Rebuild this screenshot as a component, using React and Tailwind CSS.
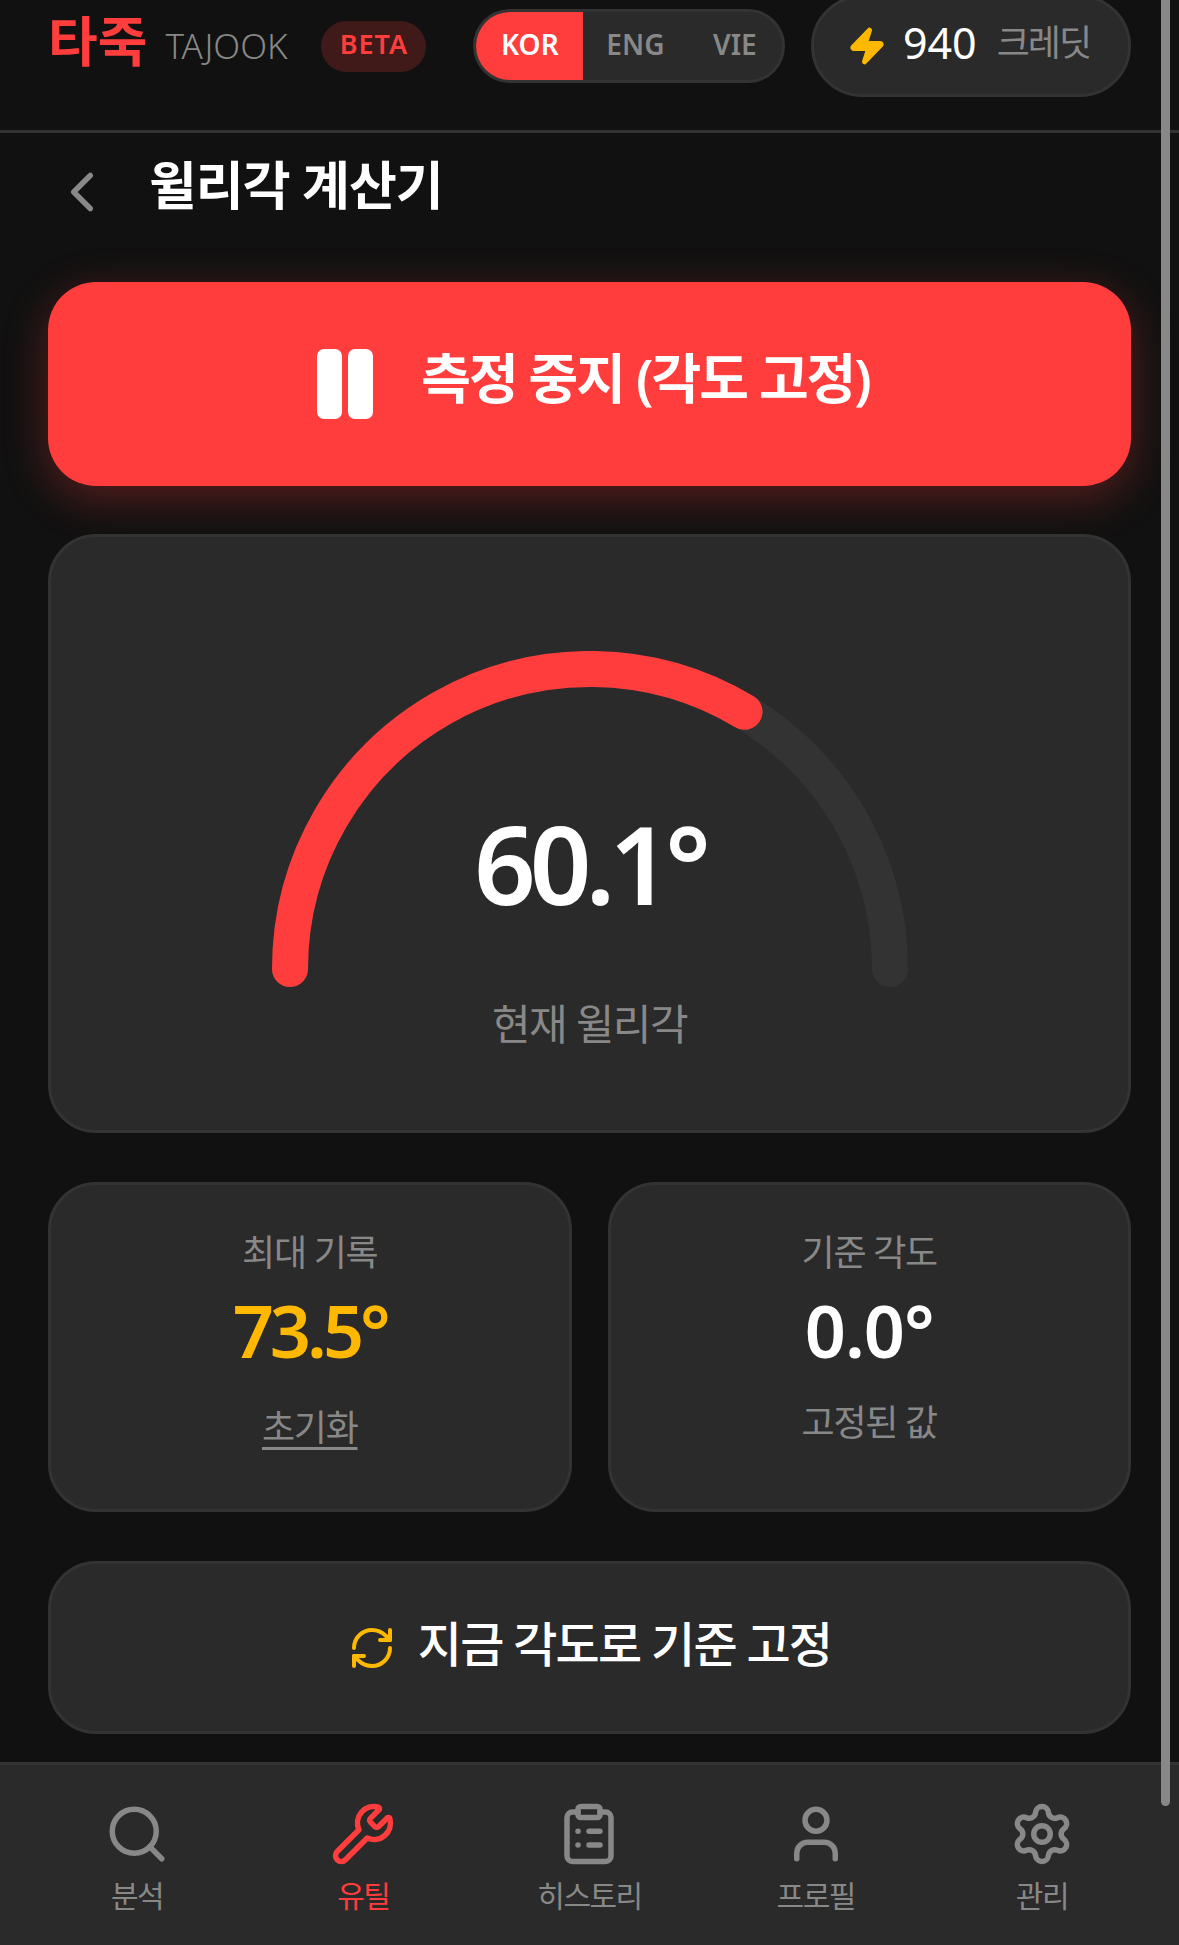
import React from "react"
import { ChevronLeft, ClipboardList, RefreshCw, Search, Settings, User, Wrench, Zap } from "lucide-react"

const font = "font-['Noto_Sans','Noto_Sans_CJK_KR',sans-serif]"

const navItems = [
  { label: "분석", Icon: Search },
  { label: "유틸", Icon: Wrench, active: true },
  { label: "히스토리", Icon: ClipboardList },
  { label: "프로필", Icon: User },
  { label: "관리", Icon: Settings },
]

const Header = () => (
  <header className="h-[133px] shrink-0 border-b-[3px] border-[#333333] px-[48px] pb-[38px] flex items-center">
    <span className="mb-[10px] shrink-0 whitespace-nowrap text-[54px] leading-none font-bold text-[#ff3d3d]">타죽</span>
    <span className="ml-[18px] mb-[2px] w-[124px] shrink-0 text-[35px] leading-none font-light text-[#888888]">TAJOOK</span>
    <span className="ml-[32px] h-[51px] w-[105px] shrink-0 pb-[3px] rounded-full bg-[#ff3d3d]/20 flex items-center justify-center text-[27px] font-semibold tracking-[1px] text-[#ff3d3d]">BETA</span>
    <div className="ml-[47px] h-[74px] w-[312px] shrink-0 rounded-full border-[3px] border-[#333333] bg-[#2a2a2a] flex overflow-hidden text-[28px] font-semibold">
      <span className="w-[107px] pb-[5px] bg-[#ff3d3d] text-white flex items-center justify-center">KOR</span>
      <span className="w-[104px] pb-[5px] text-[#888888] flex items-center justify-center">ENG</span>
      <span className="w-[95px] pb-[5px] text-[#888888] flex items-center justify-center">VIE</span>
    </div>
    <div className="ml-auto h-[102px] w-[320px] shrink-0 pr-[5px] rounded-full border-[3px] border-[#333333] bg-[#2a2a2a] flex items-center justify-center">
      <Zap size={40} className="text-[#ffb800] fill-[#ffb800]" />
      <span className="ml-[16px] mb-[8px] text-[43px] leading-none text-white">940</span>
      <span className="ml-[20px] mb-[6px] text-[36px] leading-none tracking-[-2px] text-[#888888]">크레딧</span>
    </div>
  </header>
)

const Gauge = () => (
  <svg width="636" height="336" viewBox="0 0 636 336" fill="none">
    <path d="M18 318 A300 300 0 0 1 618 318" stroke="#333333" strokeWidth="36" strokeLinecap="round" />
    <path d="M18 318 A300 300 0 0 1 472.5 60.8" stroke="#ff3d3d" strokeWidth="36" strokeLinecap="round" />
  </svg>
)

const StatCard = ({ title, value, valueClass, children }) => (
  <div className="h-[330px] rounded-[48px] border-[3px] border-[#333333] bg-[#2a2a2a] flex flex-col items-center pt-[44px]">
    <div className="text-[36px] leading-[48px] tracking-[-1.3px] text-[#888888]">{title}</div>
    <div className={`mt-[7px] text-[72px] leading-[92px] font-semibold ${valueClass}`}>{value}</div>
    {children}
  </div>
)

const App = () => (
  <div className={`relative h-[1945px] w-full overflow-hidden bg-[#111111] flex flex-col ${font}`}>
    <Header />

    <main className="flex-1 px-[48px] flex flex-col">
      <div className="h-[149px] flex items-start">
        <ChevronLeft size={66} strokeWidth={2} className="ml-[1px] mt-[26px] text-[#888888]" />
        <h1 className="ml-[34px] mt-[15px] text-[52px] leading-[74px] font-semibold tracking-[-1px] text-white">윌리각 계산기</h1>
      </div>

      <button className="h-[204px] rounded-[48px] bg-[#ff3d3d] shadow-[0_12px_45px_rgba(255,61,61,0.3)] flex items-center justify-center text-white">
        <svg width="56" height="70" viewBox="0 0 56 70" fill="white" className="ml-[8px] mr-[48px]">
          <rect x="0" y="0" width="25" height="70" rx="7" />
          <rect x="31" y="0" width="25" height="70" rx="7" />
        </svg>
        <span className="mb-[12px] text-[54px] leading-none font-semibold tracking-[-2px]">측정 중지 (각도 고정)</span>
      </button>

      <section className="mt-[48px] h-[599px] rounded-[48px] border-[3px] border-[#333333] bg-[#2a2a2a] flex flex-col items-center pt-[114px]">
        <div className="relative">
          <Gauge />
          <div className="absolute left-0 right-0 top-[138px] text-center text-[108px] leading-[150px] font-semibold tracking-[-6px] text-white">60.1°</div>
        </div>
        <div className="mt-[2px] text-[42px] leading-[70px] tracking-[-1.5px] text-[#888888]">현재 윌리각</div>
      </section>

      <div className="mt-[49px] grid grid-cols-2 gap-[36px]">
        <StatCard title="최대 기록" value="73.5°" valueClass="tracking-[-4px] text-[#ffb800]">
          <div className="mt-[28px] text-[36px] leading-[48px] tracking-[-1.3px] text-[#888888] underline underline-offset-[6px]">초기화</div>
        </StatCard>
        <StatCard title="기준 각도" value="0.0°" valueClass="tracking-[-1px] text-white">
          <div className="mt-[23px] text-[36px] leading-[48px] tracking-[-1.3px] text-[#888888]">고정된 값</div>
        </StatCard>
      </div>

      <button className="mt-[49px] h-[173px] rounded-[48px] border-[3px] border-[#333333] bg-[#2a2a2a] flex items-center justify-center text-white">
        <RefreshCw size={48} className="text-[#ffb800]" />
        <span className="ml-[22px] mb-[8px] text-[48px] leading-none font-medium tracking-[-1.8px]">지금 각도로 기준 고정</span>
      </button>
    </main>

    <nav className="h-[183px] shrink-0 border-t-[3px] border-[#333333] bg-[#2a2a2a] px-[24px] grid grid-cols-5">
      {navItems.map(({ label, Icon, active }) => (
        <div key={label} className={`flex flex-col items-center pt-[36px] ${active ? "text-[#ff3d3d]" : "text-[#888888]"}`}>
          <Icon size={66} strokeWidth={2} />
          <span className="mt-[9px] text-[30px] leading-[40px] tracking-[-1.5px]">{label}</span>
        </div>
      ))}
    </nav>

    <div className="absolute right-[9px] top-0 h-[1806px] w-[9px] rounded-b-full bg-[#888888]" />
  </div>
)

export default App
